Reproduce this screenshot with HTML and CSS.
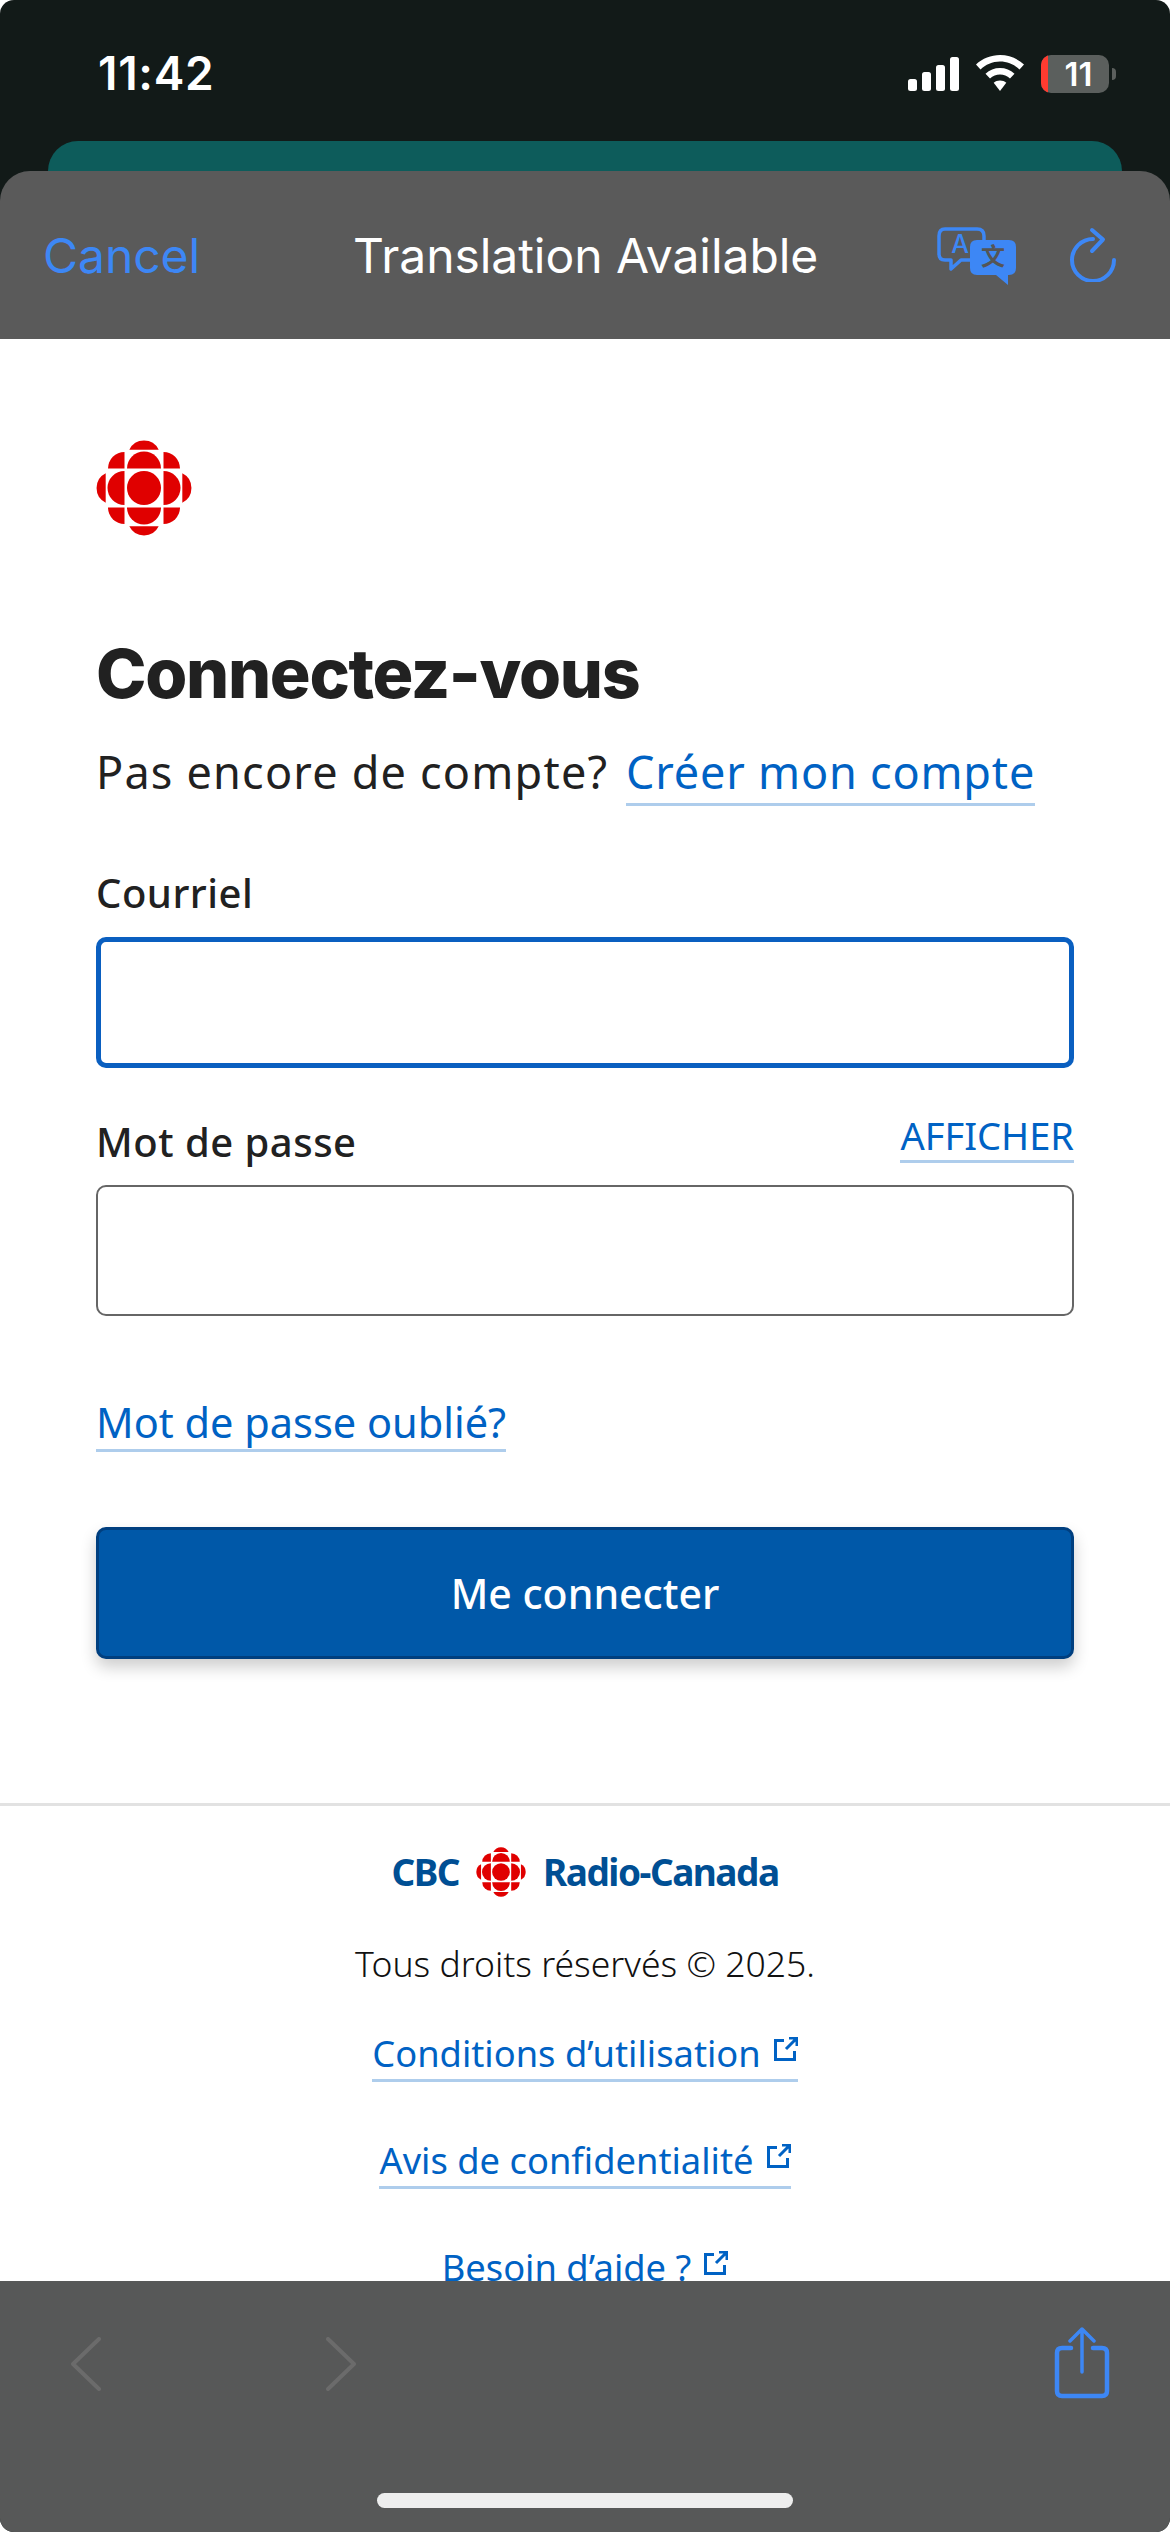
FILE: index.html
```html
<!DOCTYPE html>
<html lang="fr">
<head>
    <meta charset="UTF-8">
    <meta name="viewport" content="width=device-width, initial-scale=1.0">
    <title>Connectez-vous</title>
    <link rel="stylesheet" href="styles.css">
</head>
<body>
    <svg class="defs" width="0" height="0">
        <symbol id="gem" viewBox="-48 -48 96 96">
            <circle r="17"/>
            <path d="M-17-19.5A17 17 0 0 1 17-19.5Z"/>
            <path d="M-17 19.5A17 17 0 0 0 17 19.5Z"/>
            <path d="M-19.5-17A17 17 0 0 0-19.5 17Z"/>
            <path d="M19.5-17A17 17 0 0 1 19.5 17Z"/>
            <path d="M-19.5-19.5H-36A16.5 16.5 0 0 1-19.5-36Z"/>
            <path d="M19.5-19.5H36A16.5 16.5 0 0 0 19.5-36Z"/>
            <path d="M-19.5 19.5H-36A16.5 16.5 0 0 0-19.5 36Z"/>
            <path d="M19.5 19.5H36A16.5 16.5 0 0 1 19.5 36Z"/>
            <path d="M-14.7-38.3A16.4 16.4 0 0 1 14.7-38.3Z"/>
            <path d="M-14.7 38.3A16.4 16.4 0 0 0 14.7 38.3Z"/>
            <path d="M-38.3-14.7A16.4 16.4 0 0 0-38.3 14.7Z"/>
            <path d="M38.3-14.7A16.4 16.4 0 0 1 38.3 14.7Z"/>
        </symbol>
        <symbol id="ext" viewBox="0 0 24 24">
            <path d="M10 3.500H1.500V22.500H20.500V14M12 12L23 1M15 1H23V9" fill="none" stroke="currentColor" stroke-width="3"/>
        </symbol>
    </svg>

    <div class="screen">
        <div class="status">
            <span class="time">11:42</span>
            <div class="status-icons">
                <svg class="signal" width="52" height="34" viewBox="0 0 52 34" fill="#fff">
                    <rect x="0" y="22" width="9" height="12" rx="2.5"/>
                    <rect x="14" y="15" width="9" height="19" rx="2.5"/>
                    <rect x="28" y="8" width="9" height="26" rx="2.5"/>
                    <rect x="42" y="0" width="9" height="34" rx="2.5"/>
                </svg>
                <svg class="wifi" width="48" height="36" viewBox="0 0 48 36" fill="#fff">
                    <path d="M24 0C33 0 41.500 3.500 48 9.500L43.500 14.500C38.500 9.500 31.500 6.500 24 6.500S9.500 9.500 4.500 14.500L0 9.500C6.500 3.500 15 0 24 0Z"/>
                    <path d="M24 13C29.500 13 34.500 15 38.500 18.700L34 23.500C31.200 21 27.700 19.500 24 19.500S16.800 21 14 23.500L9.500 18.700C13.500 15 18.500 13 24 13Z"/>
                    <path d="M24 25.500C26.500 25.500 28.500 26.300 30.300 27.700L24 36L17.700 27.700C19.500 26.300 21.500 25.500 24 25.500Z"/>
                </svg>
                <div class="battery"><span class="battery-low"></span><span class="battery-num">11</span></div>
                <span class="battery-nub"></span>
            </div>
        </div>

        <div class="back-card"></div>

        <div class="sheet-head">
            <span class="cancel">Cancel</span>
            <span class="sheet-title">Translation Available</span>
            <div class="head-icons">
                <svg class="translate" width="82" height="58" viewBox="0 0 82 58">
                    <path d="M8 2H40Q47 2 47 9V27Q47 33 40 33H24L14 42V33H8Q2 33 2 27V9Q2 2 8 2Z" fill="none" stroke="#3d87f5" stroke-width="3.500" stroke-linejoin="round"/>
                    <text x="23" y="26" class="tr-a">A</text>
                    <path d="M40 13H72Q79 13 79 20V41Q79 48 72 48H71V58L59 48H40Q33 48 33 41V20Q33 13 40 13Z" fill="#3d87f5"/>
                    <text x="56" y="38" class="tr-b">文</text>
                </svg>
                <svg class="reload" width="48" height="56" viewBox="0 0 48 56" fill="none" stroke="#3d87f5" stroke-width="4" stroke-linecap="round" stroke-linejoin="round">
                    <path d="M23 13A21 21 0 1 0 44 34"/>
                    <path d="M22 4L33 13.500L22 25"/>
                </svg>
            </div>
        </div>

        <main class="page">
            <form class="login">
                <svg class="gem-big"><use href="#gem"/></svg>
                <h1>Connectez-vous</h1>
                <p class="signup">Pas encore de compte? <a class="link signup-link" href="#">Créer mon compte</a></p>

                <label class="field-label" for="email">Courriel</label>
                <input class="field field-focus" id="email" type="email">

                <div class="pass-row">
                    <label class="field-label" for="pass">Mot de passe</label>
                    <a class="link show-pass" href="#">AFFICHER</a>
                </div>
                <input class="field" id="pass" type="password">

                <div class="forgot"><a class="link" href="#">Mot de passe oublié?</a></div>
                <button class="submit" type="button">Me connecter</button>
            </form>

            <footer class="foot">
                <div class="foot-logo">
                    <span>CBC</span>
                    <svg class="gem-small"><use href="#gem"/></svg>
                    <span>Radio-Canada</span>
                </div>
                <p class="rights">Tous droits réservés © 2025.</p>
                <a class="link foot-link" href="#">Conditions d’utilisation <svg class="ext"><use href="#ext"/></svg></a>
                <a class="link foot-link" href="#">Avis de confidentialité <svg class="ext"><use href="#ext"/></svg></a>
                <a class="link foot-link" href="#">Besoin d’aide ? <svg class="ext"><use href="#ext"/></svg></a>
            </footer>
        </main>

        <div class="toolbar">
            <div class="tool-icons">
                <svg class="nav-left" width="30" height="54" viewBox="0 0 30 54" fill="none" stroke="#6b6b6b" stroke-width="4" stroke-linecap="round" stroke-linejoin="round">
                    <path d="M28 2L2 27L28 52"/>
                </svg>
                <svg class="nav-right" width="30" height="54" viewBox="0 0 30 54" fill="none" stroke="#6b6b6b" stroke-width="4" stroke-linecap="round" stroke-linejoin="round">
                    <path d="M2 2L28 27L2 52"/>
                </svg>
                <svg class="share" width="56" height="72" viewBox="0 0 56 72" fill="none" stroke="#3d87f5" stroke-linecap="round" stroke-linejoin="round">
                    <path d="M17 21H8Q3 21 3 26V64Q3 69 8 69H48Q53 69 53 64V26Q53 21 48 21H39" stroke-width="4.500"/>
                    <path d="M28 45V2M16 14L28 2L40 14" stroke-width="3.500"/>
                </svg>
            </div>
            <div class="home-bar"></div>
        </div>
    </div>
</body>
</html>
```

FILE: styles.css
```css
html, body {
    margin: 0;
    padding: 0;
    background: #fff;
}
.defs {
    display: block;
}
.screen {
    width: 1170px;
    height: 2532px;
    display: flex;
    flex-direction: column;
    overflow: hidden;
    border-radius: 14px;
    background: #121a18;
    font-family: 'Noto Sans', sans-serif;
}

/* status bar */
.status {
    height: 141px;
    flex: none;
    padding: 0 54px 0 98px;
    box-sizing: border-box;
    display: flex;
    justify-content: space-between;
    align-items: flex-start;
}
.time {
    margin-top: 46px;
    color: #fff;
    font-family: Inter, sans-serif;
    font-size: 46px;
    line-height: 55px;
    font-weight: 600;
    letter-spacing: 0.7px;
}
.status-icons {
    margin-top: 55px;
    display: flex;
    align-items: flex-start;
}
.signal {
    margin-top: 2px;
    margin-right: 16px;
}
.wifi {
    margin-right: 17px;
}
.battery {
    width: 68px;
    height: 38px;
    border-radius: 10px;
    background: #5b5f5d;
    overflow: hidden;
    display: flex;
}
.battery-low {
    width: 7px;
    background: #ff3b30;
}
.battery-num {
    flex: 1;
    color: #fff;
    font-family: Inter, sans-serif;
    font-size: 33px;
    font-weight: 600;
    line-height: 38px;
    text-align: center;
}
.battery-nub {
    width: 4px;
    height: 12px;
    margin: 13px 0 0 3px;
    background: #5b5f5d;
    border-radius: 0 4px 4px 0;
}

.back-card {
    flex: none;
    height: 60px;
    margin: 0 48px -30px;
    background: #0d5c5b;
    border-radius: 30px 30px 0 0;
}

/* translation sheet header */
.sheet-head {
    position: relative;
    flex: none;
    height: 168px;
    padding: 0 52px 0 43px;
    box-sizing: border-box;
    background: #5a5a5a;
    border-radius: 30px 30px 0 0;
    display: flex;
    align-items: center;
    font-family: Inter, sans-serif;
    font-size: 48px;
    font-weight: 400;
    letter-spacing: -0.05px;
}
.cancel {
    width: 310px;
    color: #3d87f5;
}
.sheet-title {
    width: 584px;
    color: #fff;
}
.head-icons {
    display: flex;
    align-items: flex-start;
    gap: 51px;
}
.translate {
    margin-top: 2px;
}
.reload {
    margin-top: 1px;
}
.tr-a {
    fill: #3d87f5;
    font-family: Inter, sans-serif;
    font-size: 25px;
    font-weight: 500;
    text-anchor: middle;
}
.tr-b {
    fill: #555;
    font-family: 'Noto Sans CJK SC', sans-serif;
    font-size: 24px;
    font-weight: 700;
    text-anchor: middle;
}

/* login form */
.page {
    flex: 1;
    min-height: 0;
    overflow: hidden;
    background: #fff;
}
.login {
    padding: 101px 96px 0;
    display: flex;
    flex-direction: column;
    align-items: stretch;
}
.gem-big {
    width: 96px;
    height: 96px;
    fill: #e00000;
}
h1 {
    margin: 96px 0 0;
    color: #212121;
    font-family: Inter, sans-serif;
    font-size: 68px;
    line-height: 82px;
    font-weight: 800;
    letter-spacing: -1.3px;
}
.signup {
    margin: 27px 0 0;
    color: #212121;
    font-size: 45px;
    line-height: 62px;
    letter-spacing: 1.2px;
}
.link {
    color: #0062c4;
    text-decoration: none;
    border-bottom: 3px solid #aecdec;
    padding-bottom: 1px;
}
.signup-link {
    margin-left: 5px;
    letter-spacing: 0.8px;
}
.field-label {
    display: block;
    color: #212121;
    font-size: 40px;
    line-height: 54px;
    font-weight: 500;
    letter-spacing: 0.5px;
}
.signup + .field-label {
    margin-top: 63px;
}
.field {
    display: block;
    width: 100%;
    box-sizing: border-box;
    height: 131px;
    margin-top: 17px;
    background: #fff;
    border: 2px solid #666;
    border-radius: 10px;
}
.field-focus {
    border: 5px solid #0a5fc0;
}
.pass-row {
    margin-top: 44px;
    display: flex;
    justify-content: space-between;
    align-items: flex-end;
}
.pass-row + .field {
    margin-top: 16px;
}
.show-pass {
    font-size: 38px;
    line-height: 46px;
    margin-bottom: 6px;
    padding-bottom: 2px;
}
.forgot {
    margin-top: 78px;
    font-size: 41.5px;
    line-height: 56px;
}
.forgot .link {
    display: inline-block;
    line-height: 53px;
    padding-bottom: 0;
}
.submit {
    display: block;
    width: 100%;
    height: 132px;
    margin-top: 75px;
    background: #0058a8;
    color: #fff;
    border: 3px solid #003f7f;
    border-radius: 10px;
    font-family: 'Noto Sans', sans-serif;
    font-size: 41px;
    font-weight: 500;
    box-shadow: 0 8px 16px rgba(0, 0, 0, 0.2);
}

/* footer */
.foot {
    margin-top: 144px;
    padding-top: 39px;
    border-top: 3px solid #e2e2e2;
    display: flex;
    flex-direction: column;
    align-items: center;
}
.foot-logo {
    display: flex;
    align-items: center;
    gap: 17px;
    color: #004f94;
    font-size: 37px;
    line-height: 54px;
    font-weight: 700;
    letter-spacing: -1.5px;
}
.gem-small {
    width: 50px;
    height: 52px;
    fill: #e00000;
}
.rights {
    margin: 39px 0 0;
    color: #111;
    font-size: 35.5px;
    line-height: 50px;
    font-weight: 300;
}
.foot-link {
    margin-top: 40px;
    font-size: 36.3px;
    line-height: 50px;
    display: flex;
    align-items: flex-start;
    gap: 13px;
}
.foot-link + .foot-link {
    margin-top: 53px;
}
.ext {
    width: 24px;
    height: 24px;
    margin-top: 9px;
}

/* bottom toolbar */
.toolbar {
    flex: none;
    height: 251px;
    background: #575858;
    display: flex;
    flex-direction: column;
}
.tool-icons {
    display: flex;
    align-items: flex-start;
    padding: 46px 60px 0 71px;
    height: 166px;
    box-sizing: border-box;
}
.nav-left {
    margin-top: 10px;
}
.nav-right {
    margin-top: 10px;
    margin-left: 225px;
}
.share {
    margin-left: auto;
}
.home-bar {
    width: 416px;
    height: 15px;
    margin: 46px auto 0 377px;
    background: #eee;
    border-radius: 8px;
}
```
